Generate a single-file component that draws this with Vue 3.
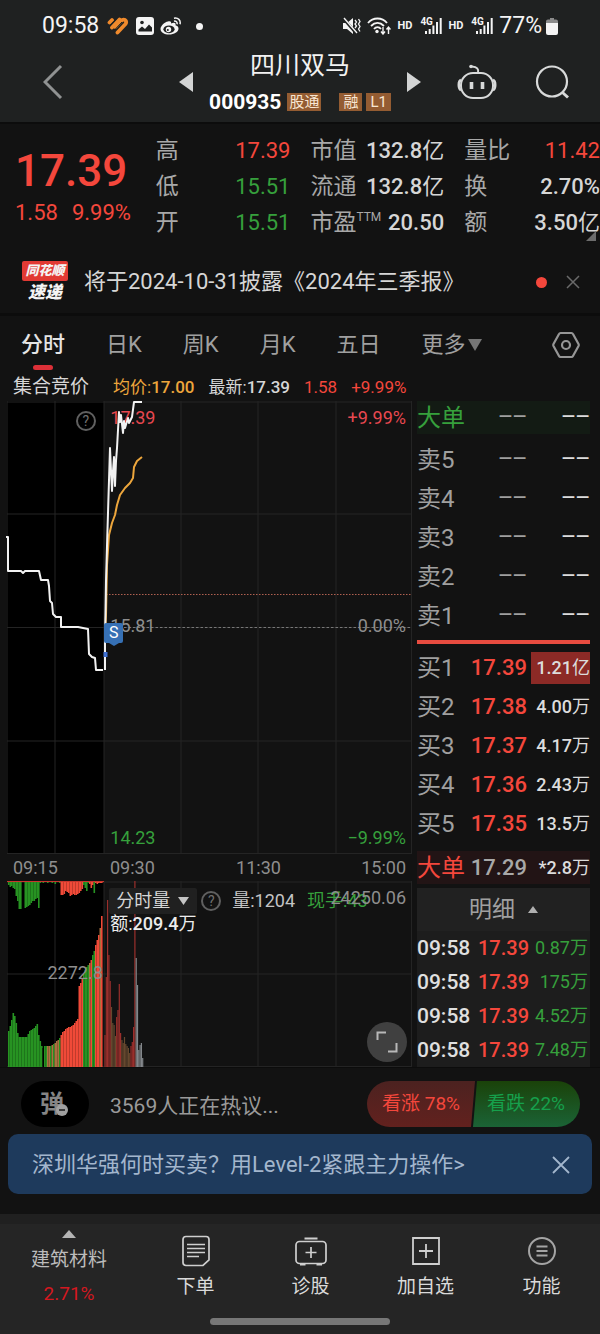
<template>
  <div class="app">
    <header class="top">
      <div class="status-bar">
        <span class="time">09:58</span>
        <svg class="ic-heart" viewBox="0 0 22 18" aria-hidden="true">
          <path d="M2.500 5.500 5 3M5 10.500l7.500-8M10.500 15.500l8-8.500q1.500-2.500-.5-4-2-1-4 1L8.500 10" fill="none" stroke="#f08a2c" stroke-width="3.800" stroke-linecap="round" stroke-linejoin="round" />
          <path d="m3.500 8.200 6-6.400M7.500 13l7.500-8" fill="none" stroke="#1f2121" stroke-width="1" />
        </svg>
        <svg class="ic-image" viewBox="0 0 18 18" aria-hidden="true">
          <rect width="18" height="18" rx="3" fill="#f4f4f4" />
          <circle cx="6" cy="5.500" r="1.800" fill="#1f2121" />
          <path d="M2.500 14.500v-2L6 9.500l3 2.500 4-4.500 3 3v4z" fill="#1f2121" />
        </svg>
        <svg class="ic-weibo" viewBox="0 0 22 18" aria-hidden="true">
          <path d="M8 4.500C4.500 5 .5 9 .5 12c0 3.500 4 5.500 8.500 5.500 5 0 9.500-2.500 9.500-6 0-2-1.500-2.800-3-3.200.6-2-.5-3.300-4.500-1.800.6-2-.8-2.500-3-2z" fill="#f4f4f4" />
          <ellipse cx="9" cy="12.300" rx="5.600" ry="3.900" fill="#1f2121" />
          <circle cx="8.500" cy="12.500" r="2.700" fill="#f4f4f4" />
          <circle cx="7.800" cy="13" r="1" fill="#1f2121" />
          <path d="M14 4.200c2-.5 3.600 1 3 3M14 1.200c4-.8 7 2 6 6" fill="none" stroke="#f4f4f4" stroke-width="1.500" />
        </svg>
        <i class="dot"></i>
        <svg class="ic-mute" viewBox="0 0 18 18" aria-hidden="true">
          <path d="M0 6h4l6-5v16l-6-5H0z" fill="#f4f4f4" />
          <path d="m0 1 13 15" stroke="#1f2121" stroke-width="3" />
          <path d="m1 1 13 15" stroke="#f4f4f4" stroke-width="1.400" />
          <path d="m12 3 1.500 2-1.500 2 1.500 2-1.500 2M15.500 2 17 4.500 15.500 7 17 9.500 15.500 12 17 14.500" fill="none" stroke="#f4f4f4" stroke-width="1.300" />
        </svg>
        <svg class="ic-wifi" viewBox="0 0 24 18" aria-hidden="true">
          <path d="M1 6c5-6 14-6 19 0M4 9c4-4 9-4 13 0M7 12c2-2.500 5-2.500 7 0" fill="none" stroke="#f4f4f4" stroke-width="1.800" />
          <circle cx="10" cy="14.500" r="1.700" fill="#f4f4f4" />
          <path d="M16 10v6.500m-2-2 2 2.500 2-2.500M21.500 17v-6.500m-2 2 2-2.500 2 2.500" fill="none" stroke="#f4f4f4" stroke-width="1.400" />
        </svg>
        <template v-for="n in 2" :key="n">
          <span class="hd">HD</span>
          <span class="signal">
            <b>4G</b>
            <svg viewBox="0 0 18 16" aria-hidden="true">
              <path d="M1 13h2v3H1zM4.700 11h2v5h-2zM8.400 7.500h2V16h-2zM12 4h2v12h-2zM15.700 0h2v16h-2z" fill="#f4f4f4" />
            </svg>
          </span>
        </template>
        <span class="percent">77%</span>
        <svg class="ic-battery" viewBox="0 0 12 17" aria-hidden="true">
          <path d="M4 0h4v1.500h2q2 0 2 2V6H0V3.500q0-2 2-2h2z" fill="#8b8b8b" />
          <path d="M0 5h12v10q0 2-2 2H2q-2 0-2-2z" fill="#f4f4f4" />
        </svg>
      </div>

      <div class="title-bar">
        <button class="icon-button back" aria-label="返回">
          <svg width="20" height="36" viewBox="0 0 20 36"><path d="M18 2 2 18l16 16" fill="none" stroke="#909292" stroke-width="3" /></svg>
        </button>
        <div class="stock">
          <button class="icon-button" aria-label="上一只">
            <svg width="14" height="20" viewBox="0 0 14 20"><path d="M14 0v20L0 10z" fill="#d2d4d4" /></svg>
          </button>
          <div class="stock-name">
            <h1>四川双马</h1>
            <div class="code">
              <strong>000935</strong>
              <span class="tag">股通</span>
              <span class="tag margin-tag">融</span>
              <span class="tag">L1</span>
            </div>
          </div>
          <button class="icon-button" aria-label="下一只">
            <svg width="14" height="20" viewBox="0 0 14 20"><path d="M0 0v20l14-10z" fill="#d2d4d4" /></svg>
          </button>
        </div>
        <div class="tools">
          <button class="icon-button" aria-label="智能助手">
            <svg width="40" height="36" viewBox="0 0 40 36" fill="none" stroke="#d8dada" stroke-width="2">
              <rect x="4" y="9" width="32" height="25" rx="12" />
              <path d="M4 16c-3 1-3 9 0 10M36 16c3 1 3 9 0 10" stroke-width="2.500" />
              <path d="M21 9c1-4-1-6-6-6.500" />
              <circle cx="14" cy="2.500" r="1.800" fill="#d8dada" stroke="none" />
              <path d="M14.500 18v7M25.500 18v7" stroke-width="3.600" />
            </svg>
          </button>
          <button class="icon-button" aria-label="搜索">
            <svg width="34" height="34" viewBox="0 0 34 34" fill="none" stroke="#d8dada" stroke-width="2.200">
              <circle cx="17" cy="16.500" r="15" />
              <path d="m27.500 27.500 5.500 5" stroke-width="3" />
            </svg>
          </button>
        </div>
      </div>
    </header>

    <section class="quote">
      <div class="last">
        <strong class="price">17.39</strong>
        <div class="change"><span>1.58</span><span>9.99%</span></div>
      </div>
      <dl v-for="(group, g) in stats" :key="g" class="stat-group">
        <div v-for="s in group" :key="s.label" class="stat">
          <dt>{{ s.label }}<sup v-if="s.sup">{{ s.sup }}</sup></dt>
          <dd :class="s.color">{{ s.value }}<span class="unit">{{ s.unit }}</span></dd>
        </div>
      </dl>
      <i class="corner"></i>
    </section>

    <section class="news">
      <div class="news-logo">
        <span class="logo-top">同花顺</span>
        <span class="logo-bottom">速递</span>
      </div>
      <a href="#" class="news-text">将于2024-10-31披露《2024年三季报》</a>
      <i class="news-dot"></i>
      <button class="icon-button" aria-label="关闭">
        <svg width="14" height="14" viewBox="0 0 14 14"><path d="m1 1 12 12M13 1 1 13" stroke="#6a6a6a" stroke-width="1.500" /></svg>
      </button>
    </section>

    <nav class="tabs">
      <button v-for="t in tabs" :key="t" class="tab" :class="{ active: t === activeTab }" @click="activeTab = t">{{ t }}</button>
      <button class="tab more">
        更多<svg width="14" height="12" viewBox="0 0 14 12"><path d="M0 0h14L7 12z" fill="#767676" /></svg>
      </button>
      <button class="icon-button settings" aria-label="设置">
        <svg width="28" height="28" viewBox="0 0 28 28" fill="none" stroke="#969696" stroke-width="2.200">
          <path d="M8.500 2h11q1 0 1.500 1l5.500 10q.5 1 0 2L21 25q-.5 1-1.500 1h-11Q7.500 26 7 25L1.500 15q-.5-1 0-2L7 3q.5-1 1.500-1z" />
          <circle cx="14" cy="14" r="4" />
        </svg>
      </button>
    </nav>

    <div class="info">
      <span class="auction">集合竞价</span>
      <span class="avg">均价:<b>17.00</b></span>
      <span>最新:<b>17.39</b></span>
      <span class="up">1.58</span>
      <span class="up">+9.99%</span>
    </div>

    <main class="market">
      <div class="charts">
        <div class="plot price-plot">
          <svg class="canvas" viewBox="0 0 405 453" preserveAspectRatio="none" aria-label="分时图">
            <rect x="1" width="96" height="453" fill="#000" />
            <path class="grid" d="M0 1H405M0 113H405M0 226.500H405M0 340H405M0 452.500H405M48 0V453M97 0V453M174 0V453M251 0V453M329 0V453M404.500 0V453" />
            <path d="M99 193.500H405" stroke="#b06050" stroke-dasharray="1.500 1.500" />
            <path d="M99 226.500H405" stroke="#777" stroke-dasharray="2.500 2" />
          </svg>
          <span class="label up top-left">17.39</span>
          <span class="label up top-right">+9.99%</span>
          <span class="label mid-left">15.81</span>
          <span class="label mid-right">0.00%</span>
          <span class="label down bottom-left">14.23</span>
          <span class="label down bottom-right">−9.99%</span>
          <svg class="canvas lines" viewBox="0 0 405 453" preserveAspectRatio="none" aria-hidden="true">
            <polyline :points="averageLine" stroke="#eda63c" />
            <polyline :points="auctionLine" stroke="#f2f2f2" />
            <polyline :points="priceLine" stroke="#f2f2f2" />
            <rect x="96.500" y="251" width="4" height="5" fill="#3f6fd0" />
          </svg>
          <span class="sell-mark">S</span>
          <button class="help auction-help" aria-label="集合竞价说明">?</button>
        </div>

        <div class="axis">
          <span>09:15</span>
          <span>09:30</span>
          <span class="noon">11:30</span>
          <span class="close-time">15:00</span>
        </div>

        <div class="plot volume-plot">
          <svg class="canvas" viewBox="0 0 405 186" preserveAspectRatio="none" aria-label="分时量图">
            <rect x="1" width="96" height="186" fill="#000" />
            <path class="grid" d="M0 1H405M0 93H405M0 185.500H405M48 0V186M97 0V186M174 0V186M251 0V186M329 0V186M404.500 0V186" />
            <rect v-for="(b, i) in auctionBars" :key="'a' + i" :x="b.x" :y="186 - b.h" width="1.600" :height="b.h" :fill="b.fill" />
            <rect v-for="(b, i) in unmatchedBars" :key="'u' + i" :x="b.x" y="0" width="1.600" :height="b.h" :fill="b.fill" />
            <rect v-for="(b, i) in sessionBars" :key="'s' + i" :x="b.x" :y="186 - b.h" width="1.200" :height="b.h" :fill="b.fill" />
            <path d="M0 .5H97" stroke="#c8352c" />
          </svg>
          <div class="legend">
            <div class="legend-row">
              <span class="picker">
                <select v-model="indicator" aria-label="指标">
                  <option>分时量</option>
                  <option>量比</option>
                </select>
                <svg width="11" height="8" viewBox="0 0 11 8" aria-hidden="true"><path d="M0 0h11L5.500 8z" fill="#c4c4c4" /></svg>
              </span>
              <button class="help" aria-label="分时量说明">?</button>
              <span class="amount">量:1204</span>
              <span class="down">现手:43</span>
            </div>
            <div class="turnover">额:<b>209.4</b>万</div>
          </div>
          <span class="label volume-max">24250.06</span>
          <span class="label volume-mid">2272.8</span>
          <button class="fullscreen" aria-label="全屏">
            <svg width="22" height="22" viewBox="0 0 22 22"><path d="M1.500 9V1.500H10M20.500 12v8.500H12" fill="none" stroke="#b8b8b8" stroke-width="2" /></svg>
          </button>
        </div>
      </div>

      <aside class="book">
        <table class="big big-sell">
          <tbody>
            <tr><th scope="row">大单</th><td class="price-cell dash">−−</td><td class="vol-cell dash">−−</td></tr>
          </tbody>
        </table>
        <table class="sells">
          <tbody>
            <tr v-for="n in [5, 4, 3, 2, 1]" :key="n">
              <th scope="row">卖{{ n }}</th><td class="price-cell dash">−−</td><td class="vol-cell dash">−−</td>
            </tr>
          </tbody>
        </table>
        <div class="divider"></div>
        <table class="buys">
          <tbody>
            <tr v-for="(b, i) in buys" :key="b.price">
              <th scope="row">买{{ i + 1 }}</th>
              <td class="price-cell">{{ b.price }}</td>
              <td class="vol-cell"><span :class="{ flash: i === 0 }">{{ b.volume }}<span class="unit">{{ b.unit }}</span></span></td>
            </tr>
          </tbody>
        </table>
        <table class="big big-buy">
          <tbody>
            <tr><th scope="row">大单</th><td class="price-cell">17.29</td><td class="vol-cell">*2.8<span class="unit">万</span></td></tr>
          </tbody>
        </table>
        <div class="details">
          <button class="details-head">
            明细<svg width="10" height="7" viewBox="0 0 10 7"><path d="M0 7h10L5 0z" fill="#b0b0b0" /></svg>
          </button>
          <table>
            <tbody>
              <tr v-for="(v, i) in trades" :key="i">
                <td class="trade-time">09:58</td>
                <td class="trade-price">17.39</td>
                <td class="trade-volume">{{ v }}</td>
              </tr>
            </tbody>
          </table>
        </div>
      </aside>
    </main>

    <section class="talk">
      <button class="barrage" aria-label="关闭弹幕">
        <span>弹</span>
        <svg width="12" height="12" viewBox="0 0 12 12"><circle cx="6" cy="6" r="6" fill="#a0a0a0" /><path d="M3 6h6" stroke="#222" stroke-width="1.600" /></svg>
      </button>
      <a href="#" class="talk-text">3569人正在热议...</a>
      <div class="votes">
        <button class="vote vote-up">看涨 78%</button>
        <button class="vote vote-down">看跌 22%</button>
      </div>
    </section>

    <section class="banner">
      <a href="#">深圳华强何时买卖？用Level-2紧跟主力操作&gt;</a>
      <button class="icon-button" aria-label="关闭">
        <svg width="18" height="18" viewBox="0 0 18 18"><path d="m1 1 16 16M17 1 1 17" stroke="#a3b6cd" stroke-width="1.800" /></svg>
      </button>
    </section>

    <footer class="bottom">
      <nav class="bottom-nav">
        <a href="#" class="sector">
          <svg width="14" height="8" viewBox="0 0 14 8"><path d="M0 8h14L7 0z" fill="#b4b4b4" /></svg>
          <span>建筑材料</span>
          <span class="sector-change">2.71%</span>
        </a>
        <a href="#">
          <svg width="32" height="32" viewBox="0 0 32 32" fill="none" stroke="#cfcfcf" stroke-width="1.700">
            <path d="M6 1.500h20q3 0 3 3V25l-6 5.500H6q-3 0-3-3v-23q0-3 3-3z" />
            <path d="M7 9.500h18M7 13.500h18M7 17.500h18M7 21.500h12" />
          </svg>
          <span>下单</span>
        </a>
        <a href="#">
          <svg width="34" height="32" viewBox="0 0 34 32" fill="none" stroke="#cfcfcf" stroke-width="1.700">
            <rect x="2" y="6.500" width="30" height="22" rx="3.500" />
            <path d="M17 12v11M11.500 17.500h11" />
            <path d="M10.500 3.500h13M6 29.500h5.500M22.500 29.500H28" stroke-width="2" />
          </svg>
          <span>诊股</span>
        </a>
        <a href="#">
          <svg width="32" height="32" viewBox="0 0 32 32" fill="none" stroke="#cfcfcf" stroke-width="1.800">
            <path d="M3 3h26v26H3zM16 9v14M9 16h14" />
          </svg>
          <span>加自选</span>
        </a>
        <a href="#">
          <svg width="32" height="32" viewBox="0 0 32 32" fill="none" stroke="#a4a4a4" stroke-width="2">
            <circle cx="16" cy="16" r="13" />
            <path d="M10.500 11.500h11M10.500 16h11M10.500 20.500h11" stroke-width="2.200" />
          </svg>
          <span>功能</span>
        </a>
      </nav>
      <div class="home-bar"></div>
    </footer>
  </div>
</template>

<script setup>
import { ref } from 'vue'

const tabs = ['分时', '日K', '周K', '月K', '五日']
const activeTab = ref('分时')
const indicator = ref('分时量')

const stats = [
  [
    { label: '高', value: '17.39', color: 'up' },
    { label: '低', value: '15.51', color: 'down' },
    { label: '开', value: '15.51', color: 'down' }
  ],
  [
    { label: '市值', value: '132.8', unit: '亿' },
    { label: '流通', value: '132.8', unit: '亿' },
    { label: '市盈', sup: 'TTM', value: '20.50' }
  ],
  [
    { label: '量比', value: '11.42', color: 'up' },
    { label: '换', value: '2.70%' },
    { label: '额', value: '3.50', unit: '亿' }
  ]
]

const buys = [
  { price: '17.39', volume: '1.21', unit: '亿' },
  { price: '17.38', volume: '4.00', unit: '万' },
  { price: '17.37', volume: '4.17', unit: '万' },
  { price: '17.36', volume: '2.43', unit: '万' },
  { price: '17.35', volume: '13.5', unit: '万' }
]

const trades = ['0.87万', '175万', '4.52万', '7.48万']

const auctionLine =
  '-1,136 1,136 1,170 14,170 16,172 18,170 32,170 34,179 41,179 42,185 43,200 45,202 46,213 49,216 54,216 54,226 71,226 81,228 82,253 85,256 88,257 89,269 96,269'
const priceLine =
  '98,269 98,240 99,180 100,145 101,112 103,47 104,70 105,90 106,70 107,56 108,85 109,60 110,47 112,11 113,21 114,14 116,32 117,20 118,27 121,17 122,22 125,16 127,1 135,1'
const averageLine =
  '98,235 99,214 100,164 102,134 105,122 108,114 110,104 113,94 118,87 123,82 126,77 127,66 130,60 135,56'

const colors = { g: '#279322', r: '#f04a38', o: '#a9713f', k: '#000', d: '#9a2f2c', b: '#66482e', s: '#83878b' }

const toBars = (heights, kinds, start, step) =>
  heights.map((h, i) => ({ x: start + i * step, h, fill: colors[kinds[i]] }))

// 集合竞价：匹配量
const auctionBars = toBars(
  [
    36, 41, 47, 54, 51, 44, 34, 30, 30, 30, 30, 30, 30, 33, 36, 37, 38, 39, 41, 43, 32,
    26, 21, 19, 21, 21, 21, 21, 21, 22, 23, 24, 26, 27, 29, 32, 35, 36, 38, 39, 40, 40,
    41, 42, 44, 46, 48, 81, 84, 88, 93, 97, 100, 102, 104, 107, 112, 116, 122, 127, 132, 139, 151
  ],
  'ggggggggggggggggggggggg' + 'kggoogogooog' + 'rrrrrrrrrrrrrr' + 'rggggorggrrror',
  1,
  1.5
)

// 集合竞价：未匹配量
const unmatchedBars = toBars(
  [
    4, 6, 5, 7, 8, 15, 20, 28, 28, 0, 0, 27, 26, 25, 24, 22, 20, 20, 18, 17, 27,
    2, 1, 2, 1, 1, 2, 1, 1, 2, 1, 3, 1, 1, 2, 14, 14, 13, 10, 11, 12, 15,
    14, 13, 14, 14, 13, 12, 10, 8, 4, 7, 10, 2, 3, 7, 4, 12, 2, 3, 2, 2, 2
  ],
  'ggggggggggggggggggggggggggggggggggg' + 'rrrrrrrrrrrrrrr' + 'ggggrrrgrrrrr',
  1,
  1.5
)

// 连续竞价成交量
const sessionBars = toBars(
  [32, 90, 167, 112, 86, 60, 44, 42, 31, 50, 57, 83, 34, 27, 24, 30, 23, 21, 19, 14, 21, 25, 40, 186, 109, 82, 17, 22, 24, 9],
  'dddddbbbbddddbbbbbbbdddd' + 'ssssss',
  97.4,
  1.3
)
</script>

<style>
body {
  background: #121212;
}
</style>

<style scoped>
.app {
  display: flex;
  flex-direction: column;
  min-height: 100vh;
  background: #121212;
  color: #d6d6d6;
  font-family: Roboto, "Noto Sans CJK SC", sans-serif;
  font-size: 18px;
  line-height: 24px;
  overflow: hidden;
}

button {
  padding: 0;
  border: none;
  background: none;
  color: inherit;
  font: inherit;
  cursor: pointer;
}

a {
  color: inherit;
  text-decoration: none;
}

b {
  font-weight: 500;
}

svg {
  display: block;
}

.icon-button {
  display: flex;
}

.unit {
  font-weight: 400;
}

.up {
  color: #f4473c;
}

.down {
  color: #36a03c;
}

/* header */
.top {
  background: #1f2121;
  border-bottom: 2px solid #0c0c0c;
}

.status-bar {
  display: flex;
  align-items: center;
  height: 50px;
  padding: 2px 42px 0;
  box-sizing: border-box;
  color: #f4f4f4;
}

.time,
.percent {
  font-size: 23px;
}

.ic-heart {
  width: 22px;
  height: 18px;
  margin-left: 8px;
}

.ic-image {
  width: 18px;
  height: 18px;
  margin-left: 7px;
}

.ic-weibo {
  width: 22px;
  height: 18px;
  margin-left: 6px;
}

.dot {
  width: 7px;
  height: 7px;
  margin: 0 auto 0 14px;
  border-radius: 50%;
  background: #f4f4f4;
}

.ic-mute {
  width: 18px;
  height: 18px;
}

.ic-wifi {
  width: 24px;
  height: 18px;
  margin-left: 6px;
}

.hd {
  margin-left: 6px;
  font-size: 11px;
  font-weight: 700;
}

.signal {
  position: relative;
  margin-left: 8px;
  padding-left: 4px;
}

.signal b {
  position: absolute;
  left: 0;
  top: -2px;
  font-size: 10px;
  font-weight: 700;
  line-height: 12px;
}

.signal svg {
  width: 18px;
  height: 16px;
}

.percent {
  margin-left: 6px;
}

.ic-battery {
  width: 12px;
  height: 17px;
  margin-left: 4px;
}

.title-bar {
  display: grid;
  grid-template-columns: 1fr auto 1fr;
  align-items: center;
  padding: 0 31px 4px 43px;
}

.title-bar .icon-button {
  padding-bottom: 4px;
}

.stock {
  display: flex;
  align-items: center;
  gap: 16px;
  margin-left: -12px;
}

.stock-name {
  text-align: center;
}

h1 {
  margin: 0;
  color: #f2f2f2;
  font-size: 25px;
  font-weight: 400;
  line-height: 32px;
}

.code {
  display: flex;
  align-items: center;
  gap: 4px;
  margin-top: 4px;
  line-height: 32px;
}

.code strong {
  margin-right: 2px;
  color: #fff;
  font-size: 21px;
  font-weight: 700;
}

.tag {
  padding: 0 2px;
  background: #945c32;
  color: #f8e6d2;
  font-size: 15px;
  line-height: 18px;
}

.tag:last-child,
.margin-tag {
  padding: 0 4px;
}

.margin-tag {
  margin-left: 14px;
}

.tools {
  display: flex;
  align-items: center;
  justify-content: flex-end;
  gap: 38px;
}

/* quote */
.quote {
  position: relative;
  display: grid;
  grid-template-columns: 120fr 134fr 133fr 135fr;
  column-gap: 20px;
  padding: 9px 0 0 15px;
}

.last {
  display: flex;
  flex-direction: column;
  color: #f4473c;
}

.price {
  padding: 16px 0 8px;
  font-size: 44px;
  font-weight: 500;
  line-height: 44px;
}

.change {
  display: flex;
  gap: 14px;
  font-size: 22px;
  line-height: 24px;
}

.stat-group {
  margin: 0;
}

.stat {
  display: flex;
  justify-content: space-between;
  height: 36px;
  line-height: 36px;
  white-space: nowrap;
}

dt {
  color: #a8a8a8;
  font-size: 23px;
}

dt sup {
  font-size: 12px;
  line-height: 12px;
}

dd {
  margin: 0;
  font-size: 22px;
  font-weight: 500;
}

dd.up,
dd.down {
  font-weight: 400;
}

.corner {
  position: absolute;
  right: 4px;
  bottom: 0;
  border: 5px solid;
  border-color: transparent #6c6c6c #6c6c6c transparent;
}

/* news */
.news {
  display: flex;
  align-items: center;
  padding: 20px 20px 10px 21px;
  border-bottom: 3px solid #0c0c0c;
}

.news-logo {
  display: flex;
  flex-direction: column;
  align-items: center;
  width: 48px;
  margin-right: 15px;
  font-style: italic;
  font-weight: 900;
  color: #f4f4f4;
}

.logo-top {
  width: 46px;
  border-radius: 2px;
  background: #e23a34;
  font-size: 13px;
  line-height: 20px;
  text-align: center;
}

.logo-bottom {
  font-size: 17px;
  line-height: 22px;
}

.news-text {
  font-size: 22px;
  white-space: nowrap;
}

.news-dot {
  width: 11px;
  height: 11px;
  margin: 0 19px 0 auto;
  border-radius: 50%;
  background: #f4473c;
}

/* tabs */
.tabs {
  display: flex;
  gap: 41px;
  padding: 12px 20px 0 21px;
}

.tab {
  position: relative;
  display: flex;
  align-items: center;
  color: #a0a0a0;
  font-size: 22px;
  line-height: 34px;
  white-space: nowrap;
}

.tab.active {
  color: #e4e4e4;
  font-weight: 500;
}

.tab.active::after {
  content: "";
  position: absolute;
  left: 50%;
  bottom: -8px;
  width: 20px;
  height: 5px;
  margin-left: -10px;
  border-radius: 3px;
  background: #dc3038;
}

.more svg {
  margin-left: 3px;
}

.settings {
  align-items: center;
  margin-left: auto;
}

.info {
  display: flex;
  align-items: center;
  gap: 14px;
  padding: 13px 13px 2px;
  font-size: 17px;
  white-space: nowrap;
}

.auction {
  margin-right: 10px;
  font-size: 19px;
}

.avg {
  color: #eda63c;
}

/* charts */
.market {
  display: grid;
  grid-template-columns: minmax(0, 1fr) 173px;
  gap: 5px;
  padding: 0 10px 0 7px;
}

.charts {
  display: flex;
  flex-direction: column;
}

.plot {
  position: relative;
}

.price-plot {
  flex: 453 1 0;
}

.volume-plot {
  flex: 186 1 0;
}

.canvas {
  position: absolute;
  left: 0;
  top: 0;
  width: 100%;
  height: 100%;
  overflow: visible;
}

.grid {
  fill: none;
  stroke: #242424;
}

.lines polyline {
  fill: none;
  stroke-width: 2;
  stroke-linejoin: round;
}

.label {
  position: absolute;
  color: #8e8e8e;
}

.label.up {
  color: #e84850;
}

.label.down {
  color: #36a03c;
}

.top-left,
.top-right {
  top: 5px;
}

.top-left,
.mid-left,
.bottom-left {
  left: 25.5%;
}

.top-right,
.mid-right,
.bottom-right {
  right: 6px;
}

.mid-left,
.mid-right {
  top: 47%;
}

.bottom-left,
.bottom-right {
  bottom: 4px;
}

.sell-mark {
  position: absolute;
  left: 24%;
  top: 49%;
  width: 19px;
  border-radius: 2px;
  background: #3670b4;
  color: #fff;
  font-size: 16px;
  line-height: 20px;
  text-align: center;
}

.sell-mark::after {
  content: "";
  position: absolute;
  left: 5px;
  top: 20px;
  border: 5px solid transparent;
  border-top: 3px solid #3670b4;
}

.help {
  width: 20px;
  height: 20px;
  border: 2px solid #606060;
  border-radius: 50%;
  color: #707070;
  font-size: 14px;
  line-height: 16px;
}

.auction-help {
  position: absolute;
  left: 17%;
  top: 10px;
}

.axis {
  display: grid;
  grid-template-columns: 97fr 77fr 155fr 76fr;
  line-height: 27px;
  color: #8e8e8e;
}

.axis span {
  padding: 0 6px;
}

.noon {
  text-align: center;
}

.close-time {
  text-align: right;
}

.legend {
  position: absolute;
  left: 25%;
  top: 7px;
  color: #c4c4c4;
  white-space: nowrap;
}

.legend-row {
  display: flex;
  align-items: center;
  height: 26px;
}

.picker {
  position: relative;
  margin: 0 4px 0 1px;
}

.picker select {
  display: block;
  width: 88px;
  height: 26px;
  padding: 0 0 0 7px;
  border: none;
  border-radius: 2px;
  appearance: none;
  background: #202020;
  color: #d6d6d6;
  font: inherit;
}

.picker svg {
  position: absolute;
  right: 8px;
  top: 9px;
  pointer-events: none;
}

.amount {
  margin: 0 12px 0 11px;
}

.turnover {
  padding-left: 2px;
  line-height: 20px;
  color: #ececec;
}

.volume-max {
  right: 6px;
  top: 5px;
}

.volume-mid {
  left: 10%;
  top: 43%;
}

.fullscreen {
  position: absolute;
  right: 5px;
  bottom: 5px;
  display: flex;
  align-items: center;
  justify-content: center;
  width: 40px;
  height: 40px;
  border-radius: 50%;
  background: #404040;
}

/* order book */
table {
  width: 100%;
  border-collapse: collapse;
  table-layout: fixed;
}

th,
td {
  padding: 0;
  white-space: nowrap;
}

th {
  width: 50px;
  color: #a0a0a0;
  font-size: 24px;
  font-weight: 400;
  text-align: left;
}

.price-cell {
  width: 60px;
  color: #f4473c;
  font-size: 22px;
  font-weight: 500;
  text-align: right;
}

.vol-cell {
  color: #dcdcdc;
  font-size: 18px;
  font-weight: 500;
  text-align: right;
}

.dash {
  font-family: "Liberation Mono", monospace;
  font-size: 24px;
  font-weight: 400;
}

.price-cell.dash {
  color: #a0a0a0;
}

.sells {
  margin-top: 6px;
}

.sells tr,
.buys tr {
  height: 39px;
}

.big tr {
  height: 33px;
}

.big-sell {
  background: #131b14;
}

.big-sell th {
  color: #36a03c;
}

.big-buy {
  margin: 8px 0 4px;
  background: #221415;
}

.big-buy th {
  color: #f4473c;
}

.big-buy .price-cell {
  color: #a8a8a8;
}

.divider {
  height: 4px;
  margin: 5px 0 4px;
  background: #e84c40;
}

.flash {
  display: inline-block;
  width: 59px;
  background: #8c2a26;
  line-height: 32px;
}

.details {
  background: #1d1d1d;
}

.details-head {
  display: flex;
  align-items: center;
  justify-content: center;
  gap: 13px;
  width: 100%;
  height: 43px;
  background: #212121;
  color: #a0a0a0;
  font-size: 23px;
}

.details tr {
  height: 34px;
}

.trade-time {
  width: 54px;
  color: #e0e0e0;
  font-size: 21px;
  font-weight: 500;
}

.trade-price {
  width: 58px;
  color: #f4473c;
  font-size: 20px;
  font-weight: 500;
  text-align: right;
}

.trade-volume {
  padding-right: 2px;
  color: #36a03c;
  font-size: 18px;
  text-align: right;
}

/* discussion */
.talk {
  display: flex;
  align-items: center;
  padding: 13px 20px 7px 21px;
  border-top: 1px solid #0c0c0c;
}

.barrage {
  position: relative;
  width: 68px;
  height: 46px;
  margin-right: 21px;
  border-radius: 23px;
  background: #000;
  color: #858585;
  font-size: 24px;
  font-weight: 700;
}

.barrage span {
  margin-right: 6px;
}

.barrage svg {
  position: absolute;
  left: 35px;
  top: 23px;
}

.talk-text {
  padding-top: 3px;
  color: #9a9a9a;
  font-size: 21px;
}

.votes {
  display: flex;
  margin-left: auto;
  border-radius: 23px;
  overflow: hidden;
}

.vote {
  height: 46px;
  font-size: 19px;
}

.vote-up {
  width: 108px;
  background: linear-gradient(#4c2220, #62211e);
  color: #f4473c;
  clip-path: polygon(0 0, 100% 0, 104px 100%, 0 100%);
}

.vote-down {
  width: 108px;
  margin-left: -3px;
  background: linear-gradient(#1a4209, #1b6336);
  color: #16a04c;
  clip-path: polygon(5px 0, 100% 0, 100% 100%, 1px 100%);
}

/* banner */
.banner {
  display: flex;
  align-items: center;
  justify-content: space-between;
  margin: 0 8px 20px;
  padding: 19px 22px 17px 24px;
  border-radius: 10px;
  background: #1e3a5c;
  color: #a3b6cd;
  font-size: 22px;
  white-space: nowrap;
}

/* bottom navigation */
.bottom {
  flex: 1;
  border-top: 10px solid #202020;
  background: #252525;
}

.bottom-nav {
  display: grid;
  grid-template-columns: 138fr 115fr 115fr 115fr 117fr;
  color: #dadada;
  font-size: 19px;
}

.bottom-nav a {
  display: flex;
  flex-direction: column;
  align-items: center;
  gap: 8px;
  padding-top: 11px;
}

.bottom-nav .sector {
  gap: 10px;
  padding-top: 6px;
  color: #bcbcbc;
}

.bottom-nav .sector-change {
  color: #d41820;
}

.home-bar {
  width: 30%;
  height: 7px;
  margin: 12px auto 0;
  border-radius: 4px;
  background: #777;
}
</style>
